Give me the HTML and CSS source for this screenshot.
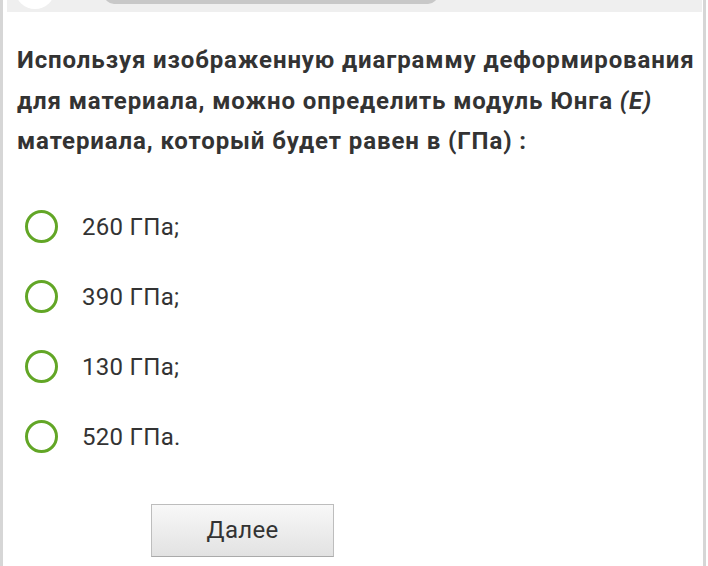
FILE: index.html
```html
<!DOCTYPE html>
<html lang="ru">

<head>
  <meta charset="UTF-8">
  <meta name="viewport" content="width=device-width, initial-scale=1.0">
  <title>Тест</title>
  <link rel="stylesheet" href="styles.css">
</head>

<body>
  <div class="page">
    <!-- верхняя панель, почти вся ушла за край экрана -->
    <div class="top-strip">
      <div class="avatar"></div>
      <div class="progress"></div>
    </div>

    <h2 class="question">Используя изображенную диаграмму деформирования для материала, можно определить модуль Юнга <i>(E)</i> материала, который будет равен в (ГПа) :</h2>

    <ul class="answers">
      <li class="answer"><span class="radio"></span><span class="answer-text">260 ГПа;</span></li>
      <li class="answer"><span class="radio"></span><span class="answer-text">390 ГПа;</span></li>
      <li class="answer"><span class="radio"></span><span class="answer-text">130 ГПа;</span></li>
      <li class="answer"><span class="radio"></span><span class="answer-text">520 ГПа.</span></li>
    </ul>

    <button class="next-btn">Далее</button>
  </div>
</body>

</html>
```

FILE: styles.css
```css
html,
body {
  margin: 0;
  padding: 0;
  background: #fff;
}

body {
  font-family: Roboto, "Noto Sans", "Liberation Sans", sans-serif;
  color: #333;
}

.page {
  width: 700px;
  height: 566px;
  border-left: 3px solid #d6d6d6;
  border-right: 3px solid #d6d6d6;
  overflow: hidden;
}

.top-strip {
  display: flex;
  align-items: flex-start;
  height: 12px;
  margin: 0 1px 0 4px;
  background: #efefef;
}

.avatar {
  width: 40px;
  height: 40px;
  margin: -31px 0 0 8px;
  border-radius: 50%;
  background: #fff;
}

.progress {
  width: 334px;
  height: 20px;
  margin: -16px 0 0 49px;
  border-radius: 10px;
  background: #c8c8c8;
}

.question {
  margin: 28px 0 0 14px;
  font-size: 24px;
  font-weight: 700;
  line-height: 40.5px;
  letter-spacing: 0.9px;
  color: #333;
}

.question i {
  font-style: italic;
}

.answers {
  list-style: none;
  margin: 30px 0 0;
  padding: 0;
}

.answer {
  display: flex;
  align-items: center;
  height: 70px;
}

.radio {
  box-sizing: border-box;
  width: 33px;
  height: 33px;
  margin-left: 22px;
  border: 3px solid #62a626;
  border-radius: 50%;
}

.answer-text {
  margin-left: 24px;
  font-size: 24px;
  letter-spacing: 0.3px;
  color: #333;
}

.next-btn {
  display: block;
  width: 183px;
  height: 53px;
  margin: 32px 0 0 148px;
  border: 1px solid #bdbdbd;
  border-bottom-color: #aaa;
  background: linear-gradient(#f8f8f8, #e2e2e2);
  font-family: Roboto, "Noto Sans", "Liberation Sans", sans-serif;
  font-size: 24px;
  letter-spacing: 0.3px;
  color: #333;
}
```
